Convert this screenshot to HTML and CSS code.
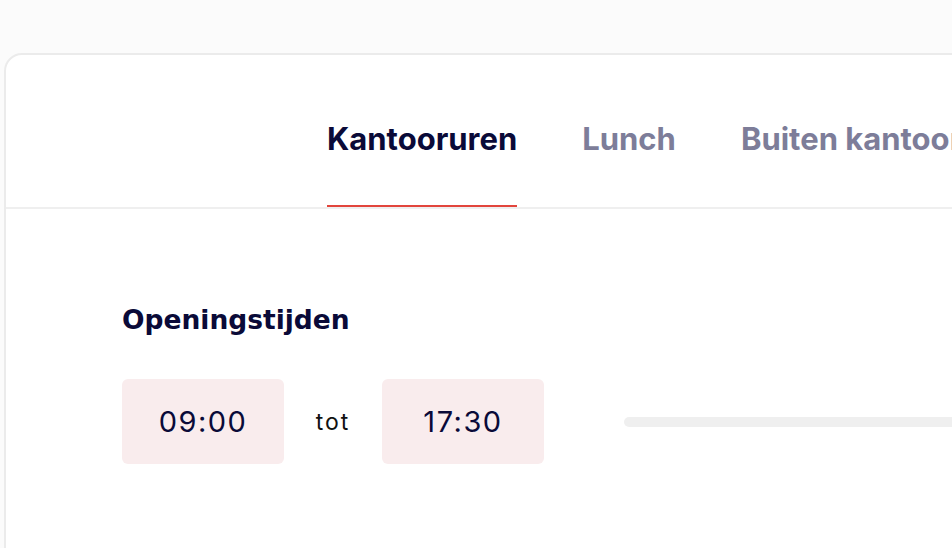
FILE: index.html
```html
<!DOCTYPE html>
<html lang="nl">
<head>
<meta charset="utf-8">
<title>Openingstijden</title>
<link rel="stylesheet" href="styles.css">
</head>
<body>
<div class="card">
  <div class="tabs">
    <div class="tab active">Kantooruren</div>
    <div class="tab">Lunch</div>
    <div class="tab">Buiten kantooruren</div>
  </div>
  <div class="content">
    <h2 class="title">Openingstijden</h2>
    <div class="row">
      <div class="time">09:00</div>
      <span class="sep">tot</span>
      <div class="time">17:30</div>
      <div class="track"></div>
    </div>
  </div>
</div>
</body>
</html>
```
FILE: styles.css
```css
html, body {
  margin: 0;
  padding: 0;
  background: #fbfbfb;
  font-family: Inter, "Noto Sans", sans-serif;
  overflow: hidden;
  width: 952px;
  height: 548px;
}
.card {
  margin: 53px 0 0 4px;
  width: 1100px;
  height: 600px;
  background: #ffffff;
  border: 2px solid #ebebeb;
  border-radius: 18px;
  box-sizing: border-box;
}
.tabs {
  display: flex;
  gap: 65px;
  height: 152px;
  padding-left: 321px;
  border-bottom: 2px solid #efefef;
  box-sizing: content-box;
}
.tab {
  font-size: 31px;
  font-weight: 700;
  line-height: 34px;
  padding-top: 67px;
  color: #7d7d99;
  white-space: nowrap;
  box-sizing: border-box;
  height: 152px;
}
.tab.active {
  color: #0a0a38;
  border-bottom: 2px solid #e2453c;
}
.content {
  padding: 95px 0 0 116px;
}
.title {
  margin: 0;
  font-family: "DejaVu Sans", Inter, sans-serif;
  font-size: 26.5px;
  line-height: 32px;
  font-weight: 700;
  color: #0a0a38;
}
.row {
  display: flex;
  align-items: center;
  margin-top: 43px;
}
.time {
  width: 162px;
  height: 85px;
  border-radius: 6px;
  background: #f9eced;
  display: flex;
  align-items: center;
  justify-content: center;
  font-size: 29px;
  letter-spacing: 1.5px;
  color: #0a0a38;
  font-weight: 400;
}
.sep {
  width: 98px;
  text-align: center;
  font-size: 23px;
  letter-spacing: 2px;
  color: #111111;
}
.track {
  margin-left: 80px;
  flex: 1;
  height: 10px;
  border-radius: 5px;
  background: #efefef;
}
```
